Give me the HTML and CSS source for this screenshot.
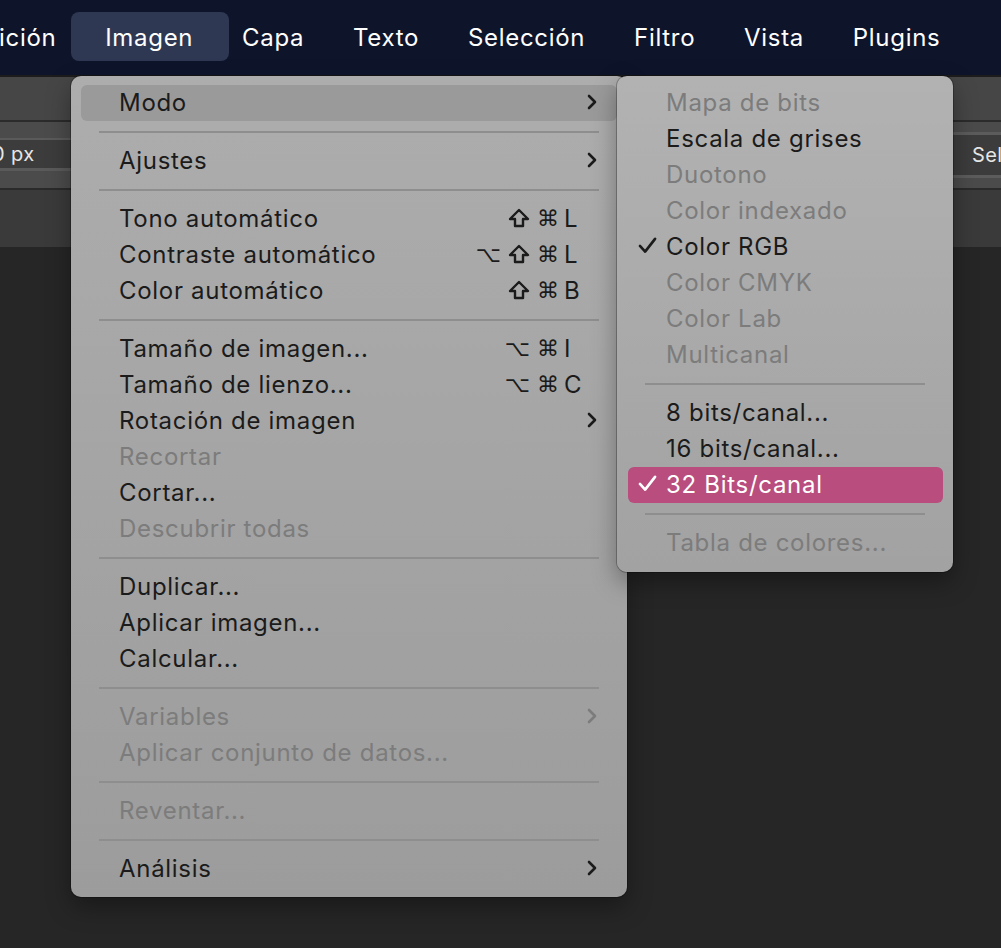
FILE: index.html
```html
<!DOCTYPE html>
<html lang="es">
<head>
    <meta charset="UTF-8">
    <meta name="viewport" content="width=device-width, initial-scale=1.0">
    <title>Imagen - Modo</title>
    <link rel="stylesheet" href="styles.css">
</head>
<body>

    <div class="menubar">
        <span class="menubar-item first">ición</span>
        <span class="menubar-item active">Imagen</span>
        <span class="menubar-item">Capa</span>
        <span class="menubar-item">Texto</span>
        <span class="menubar-item">Selección</span>
        <span class="menubar-item">Filtro</span>
        <span class="menubar-item">Vista</span>
        <span class="menubar-item">Plugins</span>
    </div>

    <div class="toolbar">
        <div class="toolbar-row top"></div>
        <div class="toolbar-row options">
            <div class="field left">0 px</div>
            <div class="field right">Sel</div>
        </div>
        <div class="toolbar-row tabs"></div>
    </div>

    <div class="workspace"></div>

    <!-- menú Imagen -->
    <div class="menu main-menu">
        <div class="item hover"><span class="label">Modo</span><svg class="chev" viewBox="0 0 10 16"><path d="M2 2 L8 8 L2 14"/></svg></div>
        <div class="sep"></div>
        <div class="item"><span class="label">Ajustes</span><svg class="chev" viewBox="0 0 10 16"><path d="M2 2 L8 8 L2 14"/></svg></div>
        <div class="sep"></div>
        <div class="item">
            <span class="label">Tono automático</span>
            <span class="key"><span class="mods"><svg class="shift" viewBox="0 0 22 20"><path d="M11 2 L20 11 L15 11 L15 18 L7 18 L7 11 L2 11 Z"/></svg><span>⌘</span></span><span class="letter">L</span></span>
        </div>
        <div class="item">
            <span class="label">Contraste automático</span>
            <span class="key"><span class="mods"><span>⌥</span><svg class="shift" viewBox="0 0 22 20"><path d="M11 2 L20 11 L15 11 L15 18 L7 18 L7 11 L2 11 Z"/></svg><span>⌘</span></span><span class="letter">L</span></span>
        </div>
        <div class="item">
            <span class="label">Color automático</span>
            <span class="key"><span class="mods"><svg class="shift" viewBox="0 0 22 20"><path d="M11 2 L20 11 L15 11 L15 18 L7 18 L7 11 L2 11 Z"/></svg><span>⌘</span></span><span class="letter">B</span></span>
        </div>
        <div class="sep"></div>
        <div class="item">
            <span class="label">Tamaño de imagen...</span>
            <span class="key"><span class="mods"><span>⌥</span><span>⌘</span></span><span class="letter">I</span></span>
        </div>
        <div class="item">
            <span class="label">Tamaño de lienzo...</span>
            <span class="key"><span class="mods"><span>⌥</span><span>⌘</span></span><span class="letter">C</span></span>
        </div>
        <div class="item"><span class="label">Rotación de imagen</span><svg class="chev" viewBox="0 0 10 16"><path d="M2 2 L8 8 L2 14"/></svg></div>
        <div class="item disabled"><span class="label">Recortar</span></div>
        <div class="item"><span class="label">Cortar...</span></div>
        <div class="item disabled"><span class="label">Descubrir todas</span></div>
        <div class="sep"></div>
        <div class="item"><span class="label">Duplicar...</span></div>
        <div class="item"><span class="label">Aplicar imagen...</span></div>
        <div class="item"><span class="label">Calcular...</span></div>
        <div class="sep"></div>
        <div class="item disabled"><span class="label">Variables</span><svg class="chev" viewBox="0 0 10 16"><path d="M2 2 L8 8 L2 14"/></svg></div>
        <div class="item disabled"><span class="label">Aplicar conjunto de datos...</span></div>
        <div class="sep"></div>
        <div class="item disabled"><span class="label">Reventar...</span></div>
        <div class="sep"></div>
        <div class="item"><span class="label">Análisis</span><svg class="chev" viewBox="0 0 10 16"><path d="M2 2 L8 8 L2 14"/></svg></div>
    </div>

    <!-- submenú Modo -->
    <div class="menu sub-menu">
        <div class="item disabled"><span class="label">Mapa de bits</span></div>
        <div class="item"><span class="label">Escala de grises</span></div>
        <div class="item disabled"><span class="label">Duotono</span></div>
        <div class="item disabled"><span class="label">Color indexado</span></div>
        <div class="item checked"><svg class="check" viewBox="0 0 20 18"><path d="M2 9.5 L7.5 15.5 L18 2"/></svg><span class="label">Color RGB</span></div>
        <div class="item disabled"><span class="label">Color CMYK</span></div>
        <div class="item disabled"><span class="label">Color Lab</span></div>
        <div class="item disabled"><span class="label">Multicanal</span></div>
        <div class="sep"></div>
        <div class="item"><span class="label">8 bits/canal...</span></div>
        <div class="item"><span class="label">16 bits/canal...</span></div>
        <div class="item checked selected"><svg class="check" viewBox="0 0 20 18"><path d="M2 9.5 L7.5 15.5 L18 2"/></svg><span class="label">32 Bits/canal</span></div>
        <div class="sep"></div>
        <div class="item disabled"><span class="label">Tabla de colores...</span></div>
    </div>

</body>
</html>
```

FILE: styles.css
```css
body {
    margin: 0;
    width: 1001px;
    height: 948px;
    overflow: hidden;
    background-color: #262626;
    font-family: 'Inter', 'Noto Sans', sans-serif;
    position: relative;
}

/* barra de menú */
.menubar {
    height: 75px;
    background-color: #0e152b;
    display: flex;
    align-items: center;
    color: #fff;
    font-size: 24px;
    letter-spacing: 0.7px;
    padding-bottom: 1px;
    box-sizing: border-box;
}

.menubar-item {
    position: relative;
    padding: 0 24.4px;
    white-space: nowrap;
    z-index: 0;
}

.menubar-item.first {
    padding-left: 0;
    margin-left: -1px;
}

.menubar-item.active::before {
    content: '';
    position: absolute;
    left: -10px;
    right: -11px;
    top: calc(50% - 25px);
    height: 49px;
    background-color: #2e3852;
    border-radius: 8px;
    z-index: -1;
}

/* barra de opciones */
.toolbar {
    border-top: 2px solid #1c1c1c;
}

.toolbar-row.top {
    height: 43px;
    background-color: #464646;
    border-bottom: 2px solid #2b2b2b;
}

.toolbar-row.options {
    height: 66px;
    background-color: #4b4b4b;
    display: flex;
    justify-content: space-between;
    align-items: center;
    border-bottom: 2px solid #2a2a2a;
}

.field {
    background-color: #3c3c3c;
    color: #e6e6e6;
    font-size: 20px;
    letter-spacing: 0.4px;
    display: flex;
    align-items: center;
    box-sizing: border-box;
    white-space: nowrap;
}

.field.left {
    width: 200px;
    height: 33px;
    margin-top: -1px;
    border-top: 2px solid #5a5a5a;
    border-bottom: 3px solid #5a5a5a;
    text-indent: -8px;
}

.field.right {
    width: 110px;
    height: 46px;
    margin-top: -1px;
    border-top: 3px solid #5c5c5c;
    border-bottom: 3px solid #5c5c5c;
    padding-left: 81px;
}

.toolbar-row.tabs {
    height: 57px;
    background-color: #3a3a3a;
}

/* menús desplegables */
.menu {
    position: absolute;
    top: 76px;
    border-radius: 10px;
    box-shadow: 0 0 0 1px rgba(0, 0, 0, 0.25), 0 10px 24px rgba(0, 0, 0, 0.35);
    font-size: 24px;
    letter-spacing: 0.7px;
    color: #1b1b1b;
    box-sizing: border-box;
}

.main-menu {
    left: 71px;
    width: 556px;
    height: 821px;
    padding: 9px 0 10px;
    background: linear-gradient(#adadad, #9c9c9c);
}

.sub-menu {
    left: 617px;
    width: 336px;
    height: 496px;
    padding: 9px 0 11px;
    background: linear-gradient(#b2b2b2, #a2a2a2);
}

.item {
    position: relative;
    height: 36px;
    margin: 0 10px;
    padding: 0 20px 0 38px;
    display: flex;
    align-items: center;
    border-radius: 6px;
    white-space: nowrap;
}

.sub-menu .item {
    margin: 0 10px 0 11px;
}

.item .label {
    flex: 1;
    margin-top: -2px;
}

.item.hover {
    background-color: #9a9a9a;
}

.item.disabled {
    color: #7c7c7c;
}

.item.selected {
    background-color: #b84d7e;
    color: #fff;
}

/* atajos de teclado */
.key {
    display: flex;
    align-items: center;
    margin-right: 15px;
    margin-top: -2px;
}

.mods {
    display: flex;
    align-items: center;
    gap: 7px;
    font-family: 'DejaVu Sans', sans-serif;
    font-size: 22px;
    letter-spacing: 0;
}

.shift {
    width: 22px;
    height: 20px;
    fill: none;
    stroke: #1b1b1b;
    stroke-width: 2.4;
    stroke-linejoin: round;
}

.letter {
    width: 18px;
    margin-left: 5px;
    letter-spacing: 0;
}

.chev {
    width: 10px;
    height: 16px;
    fill: none;
    stroke: #1b1b1b;
    stroke-width: 2.6;
    stroke-linecap: round;
    stroke-linejoin: round;
    margin-top: -2px;
}

.item.disabled .chev {
    stroke: #7c7c7c;
}

.check {
    position: absolute;
    left: 10px;
    top: 8px;
    width: 19px;
    height: 17px;
    fill: none;
    stroke: #1b1b1b;
    stroke-width: 2.8;
    stroke-linecap: round;
    stroke-linejoin: round;
}

.item.selected .check {
    stroke: #fff;
}

.sep {
    height: 22px;
    margin: 0 28px;
    display: flex;
    align-items: center;
}

.sep::before {
    content: '';
    flex: 1;
    height: 2px;
    background-color: #8e8e8e;
}
```
